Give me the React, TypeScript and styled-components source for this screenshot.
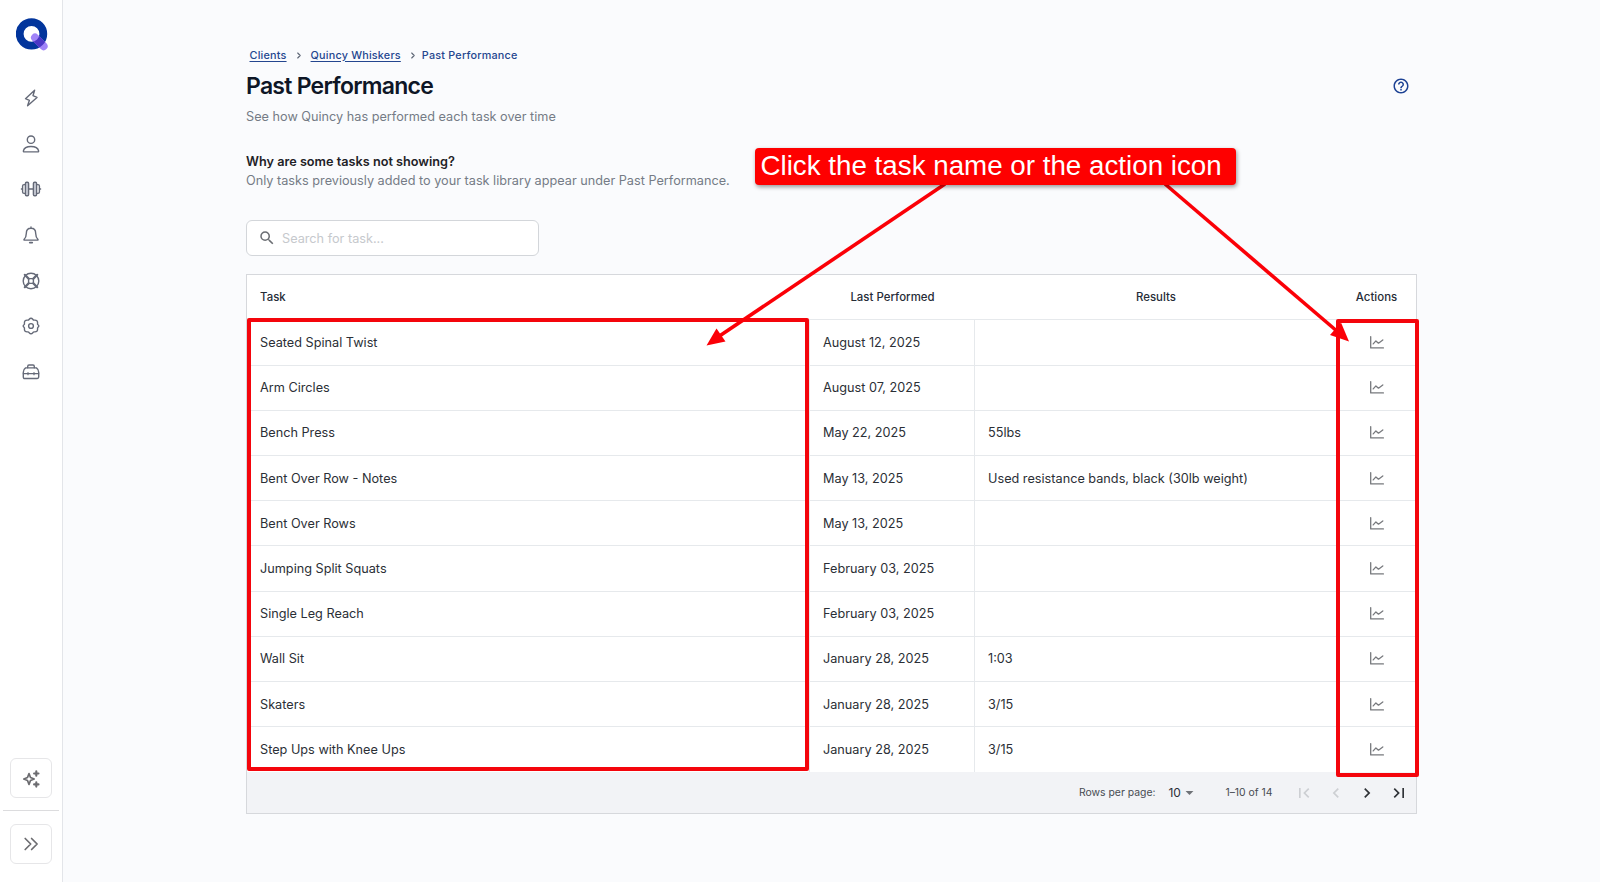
import React from "react";
import styled, { createGlobalStyle } from "styled-components";
import {
  MdArrowDropDown,
  MdChevronLeft,
  MdChevronRight,
  MdFirstPage,
  MdHelpOutline,
  MdLastPage,
  MdSearch,
} from "react-icons/md";

const Global = createGlobalStyle`
  * { box-sizing: border-box; }
  body { margin: 0; background: #fafbfd; font-family: Inter, sans-serif; color: #2b2f36; }
  button, input { font: inherit; }
`;

const Page = styled.div`
  position: relative;
  display: flex;
  width: 1600px;
  height: 882px;
  overflow: hidden;
`;

/* ---------- sidebar ---------- */

const Sidebar = styled.aside`
  display: flex;
  flex-direction: column;
  align-items: center;
  flex: none;
  width: 63px;
  height: 882px;
  padding: 18px 0 18.5px;
  background: #fff;
  border-right: 1px solid #e3e5e9;
`;

const Nav = styled.nav`
  display: flex;
  flex-direction: column;
  margin-top: 24px;
`;

const NavItem = styled.a`
  display: flex;
  align-items: center;
  justify-content: center;
  width: 40px;
  height: 45.7px;
  color: #656a78;
`;

const Spacer = styled.div`
  flex: 1;
`;

const SideButton = styled.button`
  display: flex;
  align-items: center;
  justify-content: center;
  width: 42px;
  height: 40px;
  padding: 0;
  border: 1px solid #e6e6e8;
  border-radius: 6px;
  background: #fff;
  color: #6c6c70;
`;

const SideRule = styled.div`
  width: 56px;
  height: 1px;
  margin: 12.5px 0 12.5px;
  background: #dcdcde;
`;

const Glyph = styled.svg`
  display: block;
  overflow: visible;
  fill: none;
  stroke: currentColor;
  stroke-width: 1.4;
  stroke-linecap: round;
  stroke-linejoin: round;
`;

const LogoMark = styled.svg`
  display: block;
  flex: none;
  margin-left: 1px;
`;

const Logo = () => (
  <LogoMark width="32" height="33" viewBox="0 0 32 33">
    <defs>
      <clipPath id="ring">
        <path
          clipRule="evenodd"
          d="M15.5 0.2a15.7 15.7 0 1 0 0 31.4a15.7 15.7 0 1 0 0-31.4zM15.5 8a7.9 7.9 0 1 1 0 15.8a7.9 7.9 0 1 1 0-15.8z"
        />
      </clipPath>
    </defs>
    <circle cx="15.5" cy="15.9" r="11.8" fill="none" stroke="#02359c" strokeWidth="7.8" />
    <path d="M19 19.6L27.6 28.2" stroke="#a184f8" strokeWidth="8" strokeLinecap="round" />
    <path d="M19 19.6L27.6 28.2" stroke="#4b37c6" strokeWidth="8" strokeLinecap="round" clipPath="url(#ring)" />
  </LogoMark>
);

const Bolt = () => (
  <Glyph width="18" height="18" viewBox="0 0 18 18">
    <path d="M12.6 1.2L3.5 9.7L7.4 11.3L5.6 16.8L15 8.4L11 6.7Z" />
  </Glyph>
);

const Person = () => (
  <Glyph width="18" height="18" viewBox="0 0 18 18">
    <circle cx="9" cy="4.7" r="3.7" />
    <path d="M2.2 16.9c-.7 0-.9-.4-.8-1C2 12.8 5 11.5 9 11.5s7 1.3 7.6 4.4c.1.6-.1 1-.8 1z" />
  </Glyph>
);

const Barbell = () => (
  <Glyph width="20" height="18" viewBox="0 0 20 18">
    <path d="M7.6 9h4.8M.4 9h1M18.6 9h1" />
    <rect x="4.4" y="2.2" width="3.2" height="13.6" rx="1.2" fill="#c9ccd6" />
    <rect x="12.4" y="2.2" width="3.2" height="13.6" rx="1.2" fill="#c9ccd6" />
    <path d="M4.4 4.6H3c-.9 0-1.400.5-1.400 1.300v6.200c0 .8.500 1.300 1.400 1.300h1.400M15.600 4.600H17c.9 0 1.400.5 1.400 1.300v6.200c0 .8-.5 1.300-1.400 1.300h-1.400" />
  </Glyph>
);

const Bell = () => (
  <Glyph width="18" height="18" viewBox="0 0 18 18">
    <path d="M9 2.3V.9M9 2.3c-3 0-4.700 2-4.700 5.100 0 3.400-.8 4.600-2.300 6v.7h14v-.7c-1.500-1.400-2.300-2.600-2.300-6 0-3.100-1.700-5.100-4.700-5.100z" />
    <path d="M7.8 16.6h2.4" strokeWidth="1.8" />
  </Glyph>
);

const Wheel = () => (
  <Glyph width="18" height="18" viewBox="0 0 18 18">
    <circle cx="9" cy="9" r="7.8" />
    <rect x="6.6" y="6.6" width="4.8" height="4.8" rx="1" />
    <path d="M6.600 6.600L2.800 2.800M11.400 6.600L15.200 2.800M6.600 11.400L2.800 15.200M11.400 11.400L15.200 15.200" strokeWidth="2.200" />
  </Glyph>
);

const Gear = () => (
  <Glyph width="18" height="18" viewBox="0 0 18 18">
    <circle cx="9" cy="9" r="2.4" />
    <path d="M7.2 2.300Q9 .1 10.800 2.300Q11.400 3.300 12.600 3.100Q15.700 2.900 15.600 5.900Q15.200 7 16 7.800Q17.600 9 16 10.200Q15.200 11 15.600 12.100Q15.700 15.100 12.600 14.900Q11.400 14.700 10.800 15.700Q9 17.900 7.200 15.700Q6.600 14.700 5.400 14.900Q2.300 15.100 2.400 12.100Q2.800 11 2 10.200Q.4 9 2 7.800Q2.800 7 2.400 5.900Q2.300 2.900 5.400 3.100Q6.600 3.300 7.200 2.300Z" />
  </Glyph>
);

const Toolbox = () => (
  <Glyph width="18" height="18" viewBox="0 0 18 18">
    <path d="M5.700 4.800V3.400c0-.9.500-1.400 1.300-1.400h4c.8 0 1.300.5 1.300 1.400v1.400" />
    <path d="M3.600 4.900h10.800c1.300.9 2.300 2.500 2.300 4.300v4.900c0 .9-.5 1.400-1.400 1.400H2.700c-.9 0-1.400-.5-1.400-1.400V9.200c0-1.800 1-3.400 2.300-4.300z" />
    <path d="M1.300 10.700h15.400M6 9.700v2M12 9.700v2" strokeWidth="1.200" />
  </Glyph>
);

const Sparkles = () => (
  <Glyph width="18" height="18" viewBox="0 0 18 18">
    <path d="M7 4.600L8.500 8.500L12.200 10L8.500 11.500L7 15.400L5.500 11.500L1.800 10L5.500 8.500Z" strokeWidth="1.700" />
    <path d="M14.300 2.300v4.400M12.100 4.500h4.400M14.300 13.200v4.400M12.100 15.400h4.400" strokeWidth="2.100" />
  </Glyph>
);

const Expand = () => (
  <Glyph width="16" height="14" viewBox="0 0 16 14">
    <path d="M2.200 1.500L7.700 7L2.200 12.500M8.600 1.500L14.100 7L8.600 12.500" strokeWidth="1.700" />
  </Glyph>
);

/* ---------- heading area ---------- */

const Main = styled.main`
  width: 1171px;
  margin-left: 183px;
  padding-top: 46px;
`;

const Crumbs = styled.nav`
  display: flex;
  align-items: center;
  height: 18px;
  padding-left: 3.5px;
  font-size: 10.8px;
  font-weight: 500;
  letter-spacing: 0.21px;
  color: #24468f;
  white-space: nowrap;
`;

const CrumbLink = styled.a`
  text-decoration: underline;
  text-underline-offset: 2px;
`;

const CrumbArrow = styled(Glyph)<{ $before: number; $after: number }>`
  flex: none;
  margin: 0 ${(p) => p.$after}px 0 ${(p) => p.$before}px;
  color: #5d6675;
`;

const TitleBar = styled.header`
  display: flex;
  align-items: center;
  justify-content: space-between;
  height: 43px;
  padding-right: 7px;
  color: #1d4294;
`;

const Title = styled.h1`
  margin: 0;
  font-size: 23px;
  font-weight: 600;
  letter-spacing: -0.74px;
  color: #0e1626;
`;

const Text = styled.p<{ $strong?: boolean }>`
  margin: 0;
  height: 18.5px;
  line-height: 18.5px;
  font-size: 12.7px;
  font-weight: ${(p) => (p.$strong ? 600 : 400)};
  color: ${(p) => (p.$strong ? "#1f2227" : "#757b86")};
`;

const Intro = styled(Text)`
  margin-top: 1px;
`;

const Note = styled.section`
  margin-top: 26.5px;
`;

const Search = styled.label`
  display: flex;
  align-items: center;
  gap: 6.5px;
  width: 293px;
  height: 36px;
  margin-top: 30px;
  padding-left: 10.5px;
  border: 1px solid #d3d6da;
  border-radius: 6px;
  background: #fff;
  color: #6b6e73;
`;

const SearchInput = styled.input`
  width: 220px;
  padding: 0;
  border: 0;
  outline: 0;
  background: none;
  font-size: 12.7px;
  &::placeholder { color: #c6c9cd; }
`;

/* ---------- table ---------- */

const Table = styled.section`
  margin-top: 18px;
  border: 1px solid #d6d8dc;
  background: #fff;
`;

const Row = styled.div`
  display: grid;
  grid-template-columns: 563px 165px 362px 1fr;
  height: 45.23px;
  border-bottom: 1px solid #e6e9ec;
  &:last-child { border-bottom: 0; }
`;

const HeadRow = styled(Row)`
  height: 45.3px;
`;

const HeadCell = styled.div<{ $left?: boolean }>`
  display: flex;
  align-items: center;
  justify-content: ${(p) => (p.$left ? "flex-start" : "center")};
  padding: 0 13px;
  font-size: 11.4px;
  font-weight: 500;
  letter-spacing: 0.03px;
  color: #262c37;
`;

const Cell = styled.div<{ $center?: boolean }>`
  display: flex;
  align-items: center;
  justify-content: ${(p) => (p.$center ? "center" : "flex-start")};
  padding: 0 13px;
  border-right: 1px solid #e6e9ec;
  font-size: 12.7px;
  color: #2b2f36;
  white-space: nowrap;
  &:last-child { border-right: 0; }
`;

const ChartIcon = styled(Glyph)`
  color: #77797d;
`;

const Chart = () => (
  <ChartIcon width="14" height="13" viewBox="0 0 14 13">
    <path d="M.7 .6V11.9H13.4" strokeWidth="1.3" />
    <path d="M3.2 7.9L5.900 4.900L8.500 7.200L12.800 4" strokeWidth="1.3" />
  </ChartIcon>
);

const Footer = styled.footer`
  display: flex;
  align-items: center;
  justify-content: flex-end;
  height: 40.2px;
  padding-right: 7.5px;
  background: #f2f3f6;
  font-size: 10.4px;
  color: #474b52;
`;

const PageSize = styled.span`
  display: flex;
  align-items: center;
  margin: 0 26px 0 13px;
  font-size: 12px;
  color: #2b2f36;
`;

const DropIcon = styled(MdArrowDropDown)`
  margin-left: -0.5px;
  color: #6f7277;
`;

const Pager = styled.div`
  display: flex;
  gap: 11.5px;
  margin-left: 21.5px;
`;

const PagerButton = styled.button`
  display: flex;
  padding: 0;
  border: 0;
  background: none;
  color: #2f3237;
  &:disabled { color: #cdcfd3; }
`;

/* ---------- callouts drawn over the page ---------- */

const Callout = styled.div`
  position: absolute;
  left: 755px;
  top: 148px;
  width: 481px;
  height: 37px;
  padding-left: 5.5px;
  border-radius: 4px;
  background: #fe0000;
  box-shadow: 1px 2px 4px rgba(0, 0, 0, 0.4);
  font: 27.75px/35px "Liberation Sans", Arial, sans-serif;
  color: #fff;
  white-space: nowrap;
`;

const Frame = styled.div<{ $x: number; $y: number; $w: number; $h: number }>`
  position: absolute;
  left: ${(p) => p.$x}px;
  top: ${(p) => p.$y}px;
  width: ${(p) => p.$w}px;
  height: ${(p) => p.$h}px;
  border: 4px solid #f4050c;
  border-radius: 2px;
`;

const Arrows = styled.svg`
  position: absolute;
  left: 0;
  top: 0;
  pointer-events: none;
`;

const navIcons = [Bolt, Person, Barbell, Bell, Wheel, Gear, Toolbox];

const tasks: [string, string, string][] = [
  ["Seated Spinal Twist", "August 12, 2025", ""],
  ["Arm Circles", "August 07, 2025", ""],
  ["Bench Press", "May 22, 2025", "55lbs"],
  ["Bent Over Row - Notes", "May 13, 2025", "Used resistance bands, black (30lb weight)"],
  ["Bent Over Rows", "May 13, 2025", ""],
  ["Jumping Split Squats", "February 03, 2025", ""],
  ["Single Leg Reach", "February 03, 2025", ""],
  ["Wall Sit", "January 28, 2025", "1:03"],
  ["Skaters", "January 28, 2025", "3/15"],
  ["Step Ups with Knee Ups", "January 28, 2025", "3/15"],
];

const Separator = ({ before, after }: { before: number; after: number }) => (
  <CrumbArrow width="4" height="7" viewBox="0 0 4 7" $before={before} $after={after}>
    <path d="M.7 1L3.2 3.500L.7 6" strokeWidth="1.1" />
  </CrumbArrow>
);

export default function App() {
  return (
    <Page>
      <Global />
      <Sidebar>
        <Logo />
        <Nav>
          {navIcons.map((Icon, i) => (
            <NavItem key={i}>
              <Icon />
            </NavItem>
          ))}
        </Nav>
        <Spacer />
        <SideButton aria-label="Assistant">
          <Sparkles />
        </SideButton>
        <SideRule />
        <SideButton aria-label="Expand">
          <Expand />
        </SideButton>
      </Sidebar>

      <Main>
        <Crumbs>
          <CrumbLink>Clients</CrumbLink>
          <Separator before={10} after={10} />
          <CrumbLink>Quincy Whiskers</CrumbLink>
          <Separator before={10} after={7} />
          <span>Past Performance</span>
        </Crumbs>
        <TitleBar>
          <Title>Past Performance</Title>
          <MdHelpOutline size={18} />
        </TitleBar>
        <Intro>See how Quincy has performed each task over time</Intro>
        <Note>
          <Text $strong>Why are some tasks not showing?</Text>
          <Text>Only tasks previously added to your task library appear under Past Performance.</Text>
        </Note>
        <Search>
          <MdSearch size={18} />
          <SearchInput placeholder="Search for task..." />
        </Search>

        <Table>
          <HeadRow>
            <HeadCell $left>Task</HeadCell>
            <HeadCell>Last Performed</HeadCell>
            <HeadCell>Results</HeadCell>
            <HeadCell>Actions</HeadCell>
          </HeadRow>
          <div>
            {tasks.map(([name, date, result]) => (
              <Row key={name}>
                <Cell>{name}</Cell>
                <Cell>{date}</Cell>
                <Cell>{result}</Cell>
                <Cell $center>
                  <Chart />
                </Cell>
              </Row>
            ))}
          </div>
          <Footer>
            <span>Rows per page:</span>
            <PageSize>
              10
              <DropIcon size={19} />
            </PageSize>
            <span>1–10 of 14</span>
            <Pager>
              <PagerButton disabled aria-label="First page"><MdFirstPage size={20} /></PagerButton>
              <PagerButton disabled aria-label="Previous page"><MdChevronLeft size={20} /></PagerButton>
              <PagerButton aria-label="Next page"><MdChevronRight size={20} /></PagerButton>
              <PagerButton aria-label="Last page"><MdLastPage size={20} /></PagerButton>
            </Pager>
          </Footer>
        </Table>
      </Main>

      <Frame $x={247} $y={318} $w={562} $h={453} />
      <Frame $x={1336} $y={319} $w={83} $h={458} />
      <Arrows width="1600" height="882">
        <g stroke="#fb0007" strokeWidth="3.6" fill="#fb0007">
          <path d="M945 184L718 337" />
          <path d="M1165 184L1338 332" />
          <path d="M706.5 345.5L716.5 328.5L725.5 341.5Z" stroke="none" />
          <path d="M1349 341.5L1341 322.5L1330 335Z" stroke="none" />
        </g>
      </Arrows>
      <Callout>Click the task name or the action icon</Callout>
    </Page>
  );
}
